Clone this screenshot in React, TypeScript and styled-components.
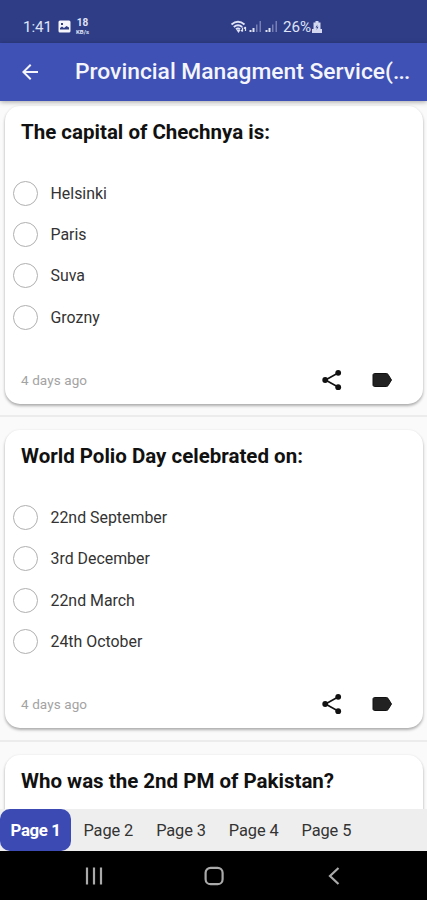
import React from 'react';
import styled, { createGlobalStyle } from 'styled-components';

const GlobalStyle = createGlobalStyle`
  * { box-sizing: border-box; }
  body { margin: 0; background: #000; font-family: Roboto, 'Liberation Sans', sans-serif; }
  button { font: inherit; border: 0; margin: 0; padding: 0; background: none; color: inherit; }
`;

const Screen = styled.div`
  width: 427px;
  height: 900px;
  display: flex;
  flex-direction: column;
  overflow: hidden;
  background: #fafafa;
`;

const StatusBar = styled.div`
  flex: none;
  height: 42.5px;
  padding: 11px 105px 0 23px;
  display: flex;
  align-items: center;
  justify-content: space-between;
  background: #2f3d87;
  color: #dfe3f5;
  font-size: 15.2px;
  line-height: 18px;
`;

const StatusGroup = styled.div`
  display: flex;
  align-items: center;
`;

const Clock = styled.span`
  width: 35px;
  letter-spacing: -0.1px;
`;

const Battery = styled.span`
  margin: 0 1px 0 3px;
  letter-spacing: -0.1px;
`;

const NetSpeed = styled.span`
  display: flex;
  flex-direction: column;
  align-items: center;
  width: 15px;
  margin-left: 4px;
  font-weight: 700;
`;

const SpeedValue = styled.span`
  font-size: 10px;
  line-height: 10px;
`;

const SpeedUnit = styled.span`
  font-size: 6px;
  line-height: 7px;
`;

const AppBar = styled.header`
  flex: none;
  height: 58px;
  display: flex;
  align-items: center;
  padding-left: 18px;
  background: #3f51b5;
  color: #f4f5fc;
  box-shadow: 0 1px 5px rgba(0, 0, 0, 0.35);
  z-index: 1;
`;

const BackButton = styled.button`
  display: flex;
  width: 57px;
`;

const AppTitle = styled.h1`
  margin: 0;
  font-size: 22.8px;
  font-weight: 500;
  line-height: 30px;
  white-space: nowrap;
`;

const Ellipsis = styled.span`
  letter-spacing: -0.8px;
`;

const QuestionList = styled.main`
  flex: 1;
  min-height: 0;
  overflow: hidden;
`;

const QuestionItem = styled.section`
  height: 324.4px;
  padding: 13px 4px 0 5px;
  border-top: 2px solid #ececec;

  &:first-child {
    height: 314.9px;
    padding-top: 5.5px;
    border-top: 0;
  }
`;

const Card = styled.article`
  height: 298px;
  padding: 11px 29.5px 0 8px;
  display: flex;
  flex-direction: column;
  border-radius: 15px;
  background: #fff;
  box-shadow: 0 2px 3px rgba(0, 0, 0, 0.3), 0 0 3px rgba(0, 0, 0, 0.05);
`;

const Question = styled.h2`
  margin: 0 0 25.5px 8px;
  font-size: 20.5px;
  font-weight: 700;
  line-height: 30px;
  color: #111;
  white-space: nowrap;
`;

const Option = styled.label`
  display: flex;
  align-items: center;
  height: 41.4px;
  gap: 12.5px;
  font-size: 15.9px;
  color: #333;
`;

const Radio = styled.input`
  appearance: none;
  width: 25px;
  height: 25px;
  margin: 0;
  border: 1.3px solid #b0b0b0;
  border-radius: 50%;
`;

const Footer = styled.footer`
  display: flex;
  align-items: center;
  height: 30px;
  margin: 26.500px 0 0 8px;
`;

const Age = styled.time`
  flex: 1;
  font-size: 13.5px;
  letter-spacing: 0.1px;
  color: #a3a3a3;
`;

const Action = styled.button`
  display: flex;
  margin-left: 26px;
  color: #111;
`;

const Pager = styled.nav`
  flex: none;
  display: flex;
  height: 42px;
  background: #eee;
`;

const PageTab = styled.button<{ $active?: boolean }>`
  width: ${(p) => (p.$active ? '71px' : '72.7px')};
  padding-left: ${(p) => (p.$active ? '0' : '2px')};
  font-size: ${(p) => (p.$active ? '16.8px' : '16.4px')};
  font-weight: ${(p) => (p.$active ? 700 : 400)};
  letter-spacing: ${(p) => (p.$active ? '-0.4px' : '-0.1px')};
  color: ${(p) => (p.$active ? '#fff' : '#333')};
  background: ${(p) => (p.$active ? '#3b4bb3' : 'transparent')};
  border-radius: 10px;
`;

const SystemNav = styled.div`
  flex: none;
  height: 49px;
  display: grid;
  grid-template-columns: repeat(3, 120px);
  justify-content: center;
  justify-items: center;
  align-items: center;
  background: #000;
  color: #aaa;
`;

const questions = [
  { title: 'The capital of Chechnya is:', options: ['Helsinki', 'Paris', 'Suva', 'Grozny'] },
  { title: 'World Polio Day celebrated on:', options: ['22nd September', '3rd December', '22nd March', '24th October'] },
  { title: 'Who was the 2nd PM of Pakistan?', options: [] },
];

const PictureIcon = () => (
  <svg width="13" height="13" viewBox="0 0 13 13">
    <path fill="#f4f5fc" fillRule="evenodd" d="M2 .5h9Q12.500.5 12.500 2v9q0 1.500-1.500 1.500H2Q.5 12.500.5 11V2Q.5.5 2 .5ZM2 9.500h9V7.500L8.500 6 6 8 4 6.500 2 8ZM3 3v2h2V3Z" />
  </svg>
);

const WifiIcon = () => (
  <svg width="18" height="14" viewBox="0 0 17 14" fill="none" stroke="currentColor" strokeWidth="1.900">
    <path d="M1 4.500Q7.500-1 14 4.500M3.300 7Q7.500 3.500 11.700 7M5.500 9.300Q7.500 7.500 9.500 9.300" />
    <path d="m6 10 2 3 2-3Z" fill="currentColor" stroke="none" />
    <path d="M12 7.500v4m-1.500-1.500 1.500 1.700M15 11V7m-1.500 1.500L15 7" strokeWidth="1.200" />
  </svg>
);

const SignalIcon = () => (
  <svg width="16" height="13" viewBox="0 0 16 13" fill="currentColor">
    <path d="M1.500 10h2v2h-2zM4.500 8h2v4h-2z" />
    <path d="M8 4.500h1.500V12H8zM11.500 1H13v11h-1.500z" opacity=".4" />
  </svg>
);

const BatteryIcon = () => (
  <svg width="10" height="14" viewBox="0 0 10 14">
    <path d="M3.500 1h3v1.500h2V9H10v4H0V9h1.500V2.500h2Z" fill="#d3d8f0" />
    <path d="M5.500 4.500 3.500 7.500h1.500L4.500 10 6.500 6.700H5Z" fill="#2f3d87" />
  </svg>
);

const BackIcon = () => (
  <svg width="24" height="24" viewBox="0 0 24 24" fill="currentColor">
    <path d="M20 11H7.830l5.590-5.590L12 4l-8 8 8 8 1.410-1.410L7.830 13H20v-2z" />
  </svg>
);

const ShareIcon = () => (
  <svg width="24" height="24" viewBox="0 0 24 24" fill="currentColor">
    <path d="m5.500 12 13-7.200M5.500 12l13 7.200" stroke="currentColor" strokeWidth="1.600" />
    <circle cx="5.200" cy="12" r="2.900" />
    <circle cx="18.200" cy="4.800" r="2.900" />
    <circle cx="18.200" cy="19.200" r="2.900" />
  </svg>
);

const LabelIcon = () => (
  <svg width="24" height="24" viewBox="0 0 24 24" fill="#222" stroke="#111" strokeWidth="1">
    <path d="M16.500 5.500H4.500c-.8 0-1.500.7-1.500 1.500v10c0 .8.7 1.500 1.500 1.500h12c.6 0 1.100-.3 1.400-.7L21.500 12l-3.600-5.800c-.3-.4-.8-.7-1.400-.7Z" />
  </svg>
);

export default function App() {
  return (
    <>
      <GlobalStyle />
      <Screen>
        <StatusBar>
          <StatusGroup>
            <Clock>1:41</Clock>
            <PictureIcon />
            <NetSpeed>
              <SpeedValue>18</SpeedValue>
              <SpeedUnit>KB/s</SpeedUnit>
            </NetSpeed>
          </StatusGroup>
          <StatusGroup>
            <WifiIcon />
            <SignalIcon />
            <SignalIcon />
            <Battery>26%</Battery>
            <BatteryIcon />
          </StatusGroup>
        </StatusBar>
        <AppBar>
          <BackButton aria-label="Back"><BackIcon /></BackButton>
          <AppTitle>Provincial Managment Service(<Ellipsis>...</Ellipsis></AppTitle>
        </AppBar>
        <QuestionList>
          {questions.map((q, i) => (
            <QuestionItem key={q.title}>
              <Card>
                <Question>{q.title}</Question>
                {q.options.map((text) => (
                  <Option key={text}>
                    <Radio type="radio" name={`question-${i}`} />
                    {text}
                  </Option>
                ))}
                {q.options.length > 0 && (
                  <Footer>
                    <Age>4 days ago</Age>
                    <Action aria-label="Share"><ShareIcon /></Action>
                    <Action aria-label="Label"><LabelIcon /></Action>
                  </Footer>
                )}
              </Card>
            </QuestionItem>
          ))}
        </QuestionList>
        <Pager>
          {[1, 2, 3, 4, 5].map((n) => (
            <PageTab key={n} $active={n === 1}>Page {n}</PageTab>
          ))}
        </Pager>
        <SystemNav>
          <svg width="20" height="20" viewBox="0 0 20 20" stroke="currentColor" strokeWidth="2.200">
            <path d="M3 1.500v17M10 1.500v17M17 1.500v17" />
          </svg>
          <svg width="20" height="20" viewBox="0 0 20 20" fill="none" stroke="currentColor" strokeWidth="2.200">
            <rect x="1.600" y="1.800" width="17" height="16.400" rx="5" />
          </svg>
          <svg width="20" height="20" viewBox="0 0 20 20" fill="none" stroke="currentColor" strokeWidth="2.200">
            <path d="m14.500 2-8.500 8 8.500 8" />
          </svg>
        </SystemNav>
      </Screen>
    </>
  );
}
